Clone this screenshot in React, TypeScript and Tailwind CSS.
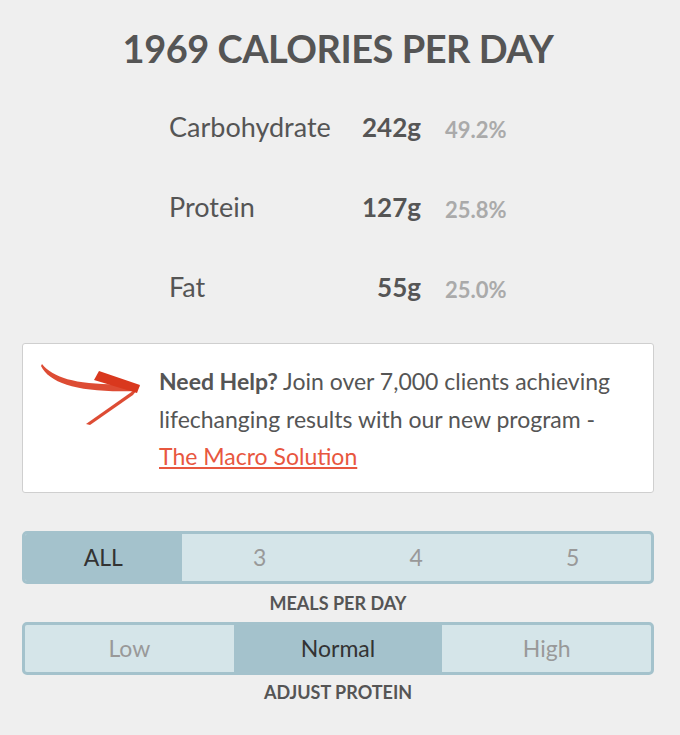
import { useState } from 'react'

const FONT = "font-['Lato','Noto_Sans',sans-serif]"

const MACROS = [
  { name: 'Carbohydrate', grams: 242, pct: '49.2%' },
  { name: 'Protein', grams: 127, pct: '25.8%' },
  { name: 'Fat', grams: 55, pct: '25.0%' },
]

const MEALS = ['ALL', '3', '4', '5']
const PROTEIN = ['Low', 'Normal', 'High']

// brush-stroke arrow pointing at the promo text
function Arrow() {
  return (
    <svg width="110" height="70" viewBox="0 0 110 70" className="shrink-0">
      <g fill="#d9381e">
        <path d="M2 1 C14 16 40 23 95 21 L96 28 C40 30 10 21 1 3 Z" opacity="0.9" />
        <path d="M54 17 L59 8 L100 22 L97 30 Z" />
        <path d="M100 23 L93 32 L50 62 L46 61 Z" opacity="0.9" />
      </g>
    </svg>
  )
}

function Segmented({ options, value, onChange }: { options: string[]; value: string; onChange: (v: string) => void }) {
  return (
    <div className="flex h-[53px] rounded-[5px] border-[3px] border-[#a4c2cc] bg-[#d5e5e9] overflow-hidden">
      {options.map(opt => (
        <button
          key={opt}
          onClick={() => onChange(opt)}
          className={`flex-1 flex items-center justify-center text-[23px] ${
            value === opt ? 'bg-[#a4c2cc] text-[#333]' : 'text-[#999]'
          }`}
        >
          {opt}
        </button>
      ))}
    </div>
  )
}

export default function App() {
  const [meals, setMeals] = useState('ALL')
  const [protein, setProtein] = useState('Normal')

  return (
    <div className={`${FONT} min-h-[735px] bg-[#efefef] pl-[22px] pr-[26px] text-[#555]`}>
      <h1 className="pt-[26px] text-center text-[38px] leading-[44px] font-bold tracking-[-0.5px]">
        1969 CALORIES PER DAY
      </h1>

      {/* macro breakdown */}
      <div className="mt-[17px] ml-[147px]">
        {MACROS.map(m => (
          <div key={m.name} className="flex h-[80px] items-center">
            <span className="w-[190px] text-[27px]">{m.name}</span>
            <span className="w-[62px] text-right text-[26px] font-bold">{m.grams}g</span>
            <span className="pl-[24px] pt-[4px] text-[22px] font-bold text-[#aaa]">{m.pct}</span>
          </div>
        ))}
      </div>

      {/* promo box */}
      <div className="mt-[16px] flex h-[150px] rounded-[3px] border border-[#cfcfcf] bg-white">
        <div className="pl-[17px] pt-[19px]">
          <Arrow />
        </div>
        <p className="pl-[9px] pr-[18px] pt-[19px] text-[23px] leading-[37.5px]">
          <b>Need Help?</b> Join over 7,000 clients achieving lifechanging results with our new program -{' '}
          <a href="#" className="text-[#e8573f] underline">The Macro Solution</a>
        </p>
      </div>

      <div className="mt-[38px]">
        <Segmented options={MEALS} value={meals} onChange={setMeals} />
        <p className="py-[6px] text-center text-[18px] leading-[26px] font-bold">MEALS PER DAY</p>
        <Segmented options={PROTEIN} value={protein} onChange={setProtein} />
        <p className="py-[4px] text-center text-[18px] leading-[26px] font-bold">ADJUST PROTEIN</p>
      </div>
    </div>
  )
}
